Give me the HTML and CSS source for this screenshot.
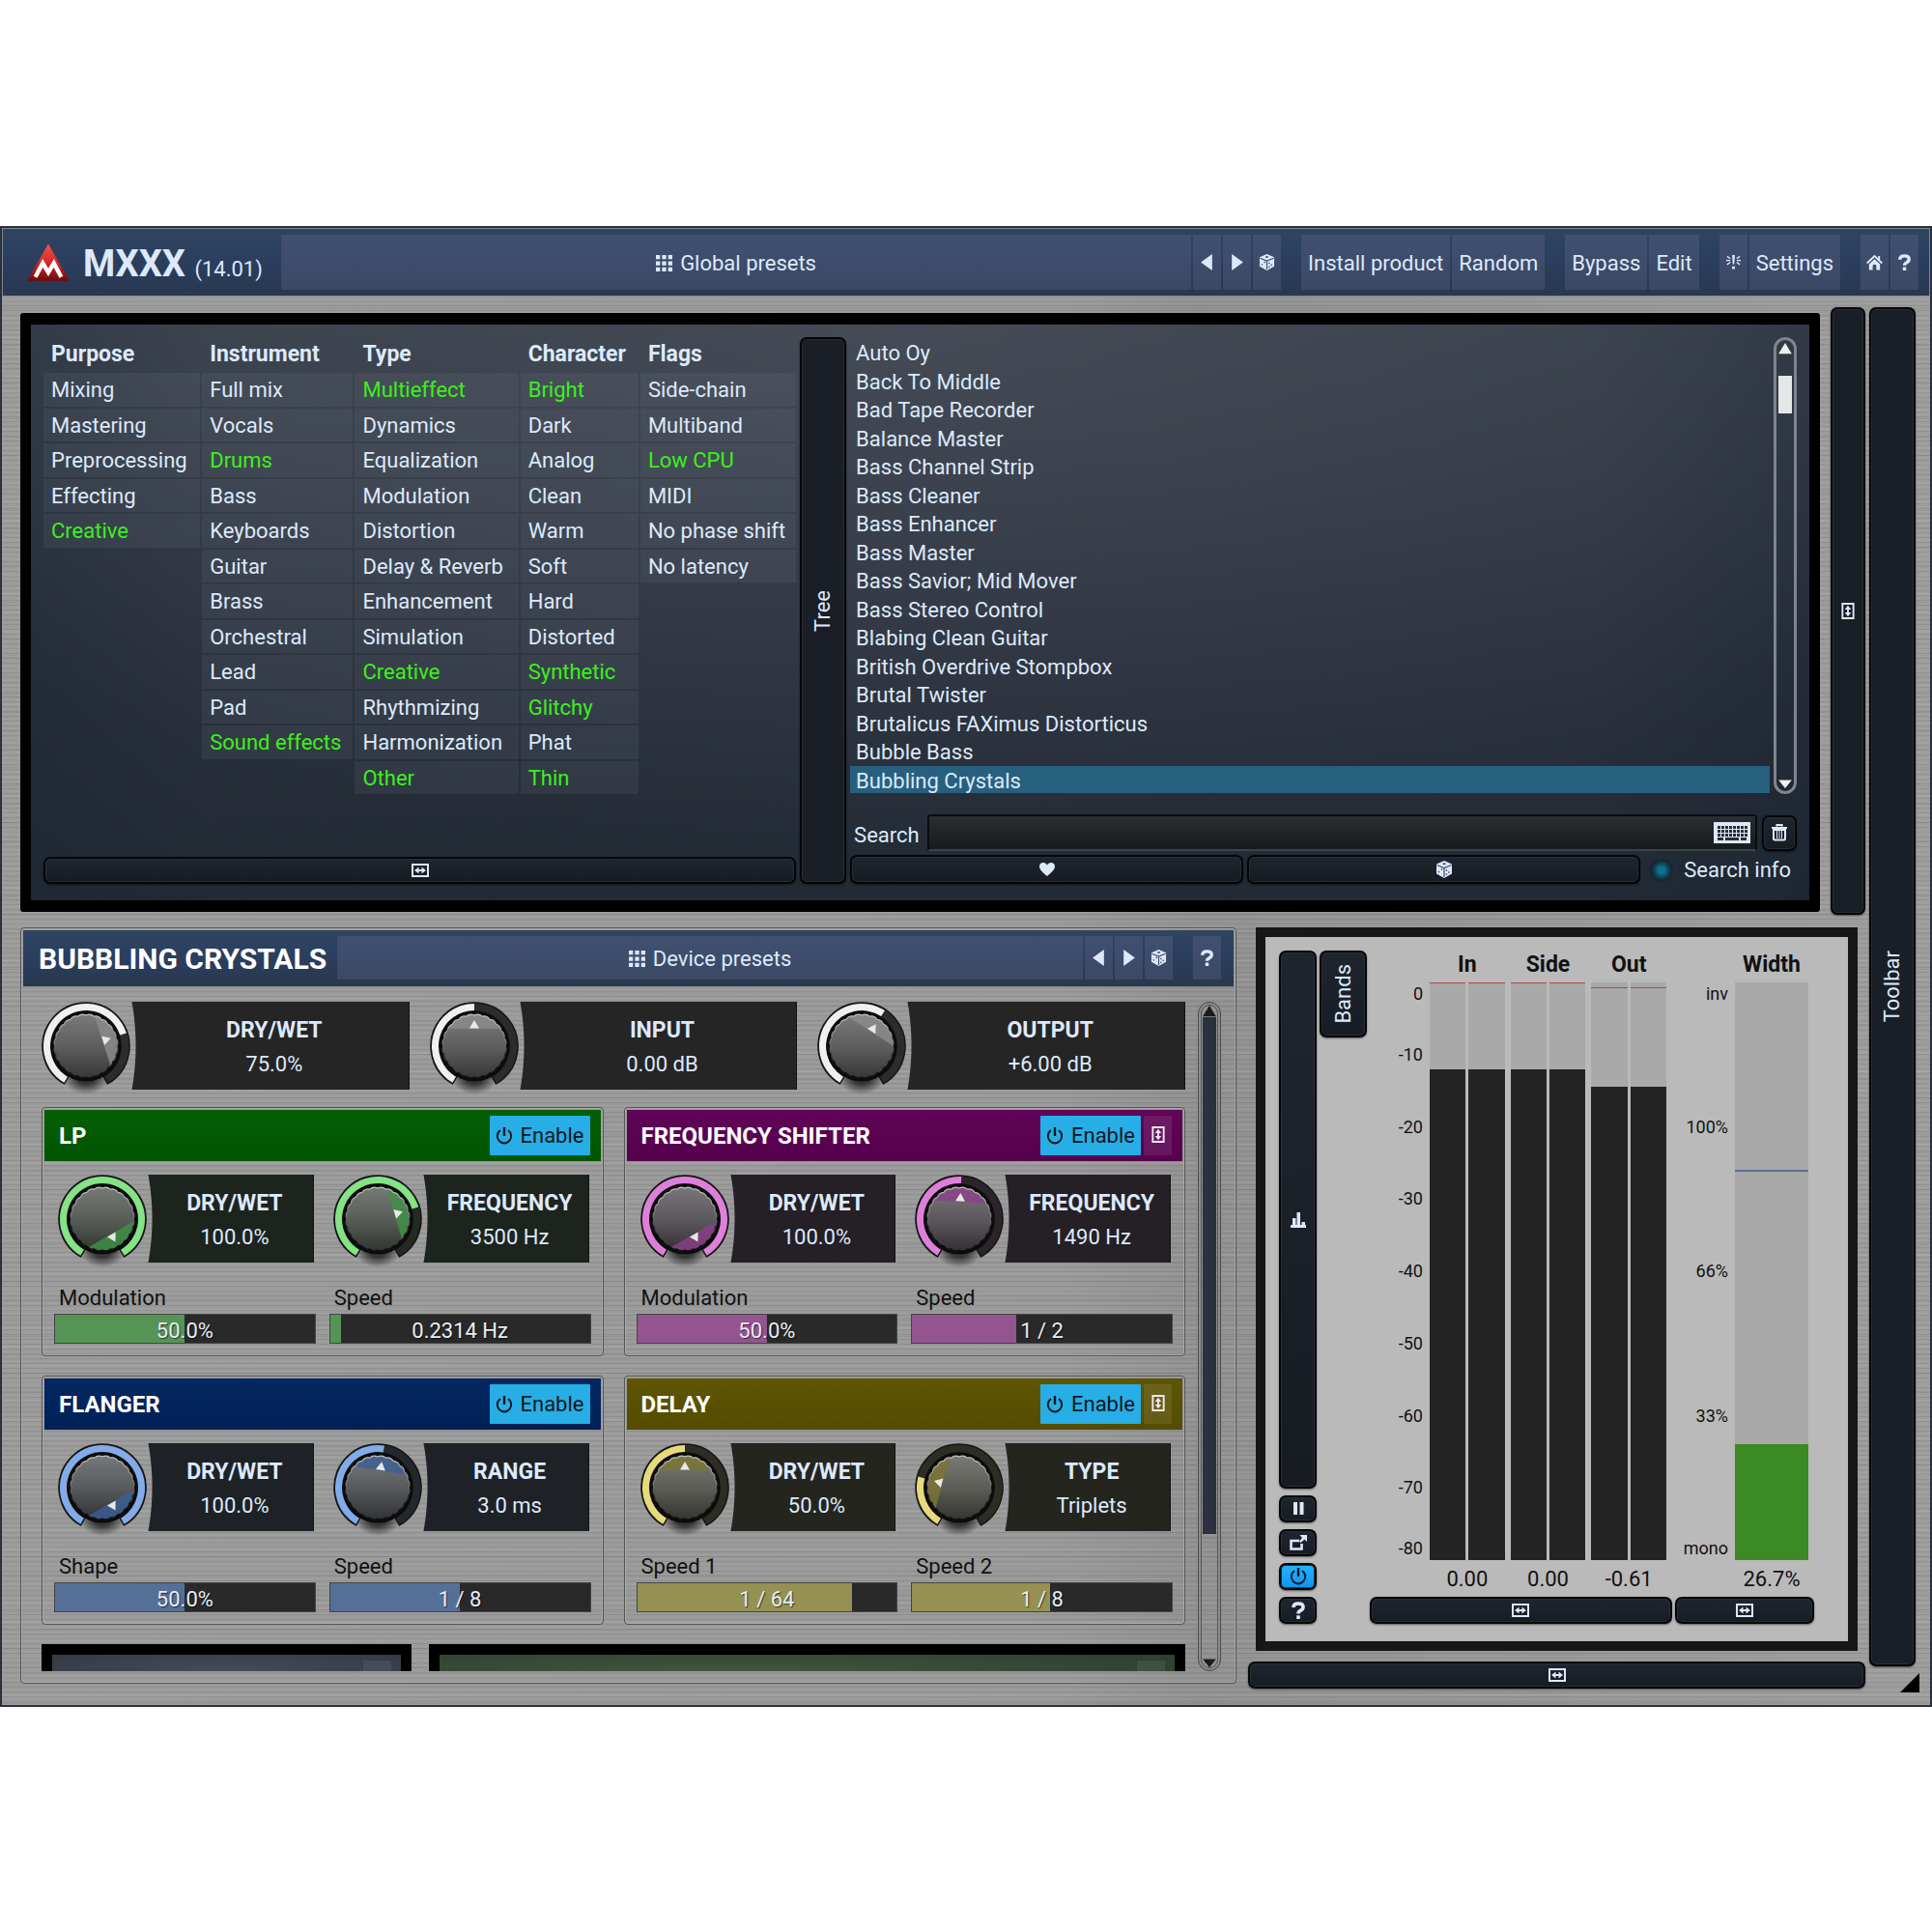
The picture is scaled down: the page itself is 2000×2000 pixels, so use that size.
FILE: index.html
```html
<!DOCTYPE html>
<html lang="en">
<head>
  <meta charset="utf-8">
  <title>MXXX</title>
  <link rel="stylesheet" href="styles.css">
</head>
<body>
  <!-- icons -->
  <svg class="sprite" aria-hidden="true">
    <linearGradient id="logo-fill" x1="0" y1="0" x2="0" y2="1">
      <stop offset="0" stop-color="#f0544c"/>
      <stop offset="0.6" stop-color="#cc2222"/>
      <stop offset="1" stop-color="#6e0a0a"/>
    </linearGradient>
    <symbol id="i-logo" viewBox="0 0 46 40">
      <path d="M23 0 45 38.500Q45.500 40 44 40H2Q.5 40 1 38.500Z" fill="url(#logo-fill)"/>
      <path d="M9 36 17 21 23 31 29 21 37 36" fill="none" stroke="#fff" stroke-width="4.500"/>
    </symbol>
    <symbol id="i-grid" viewBox="0 0 16 16">
      <path d="M0 0h4v4H0zM6 0h4v4H6zM12 0h4v4h-4zM0 6h4v4H0zM6 6h4v4H6zM12 6h4v4h-4zM0 12h4v4H0zM6 12h4v4H6zM12 12h4v4h-4z"/>
    </symbol>
    <symbol id="i-prev" viewBox="0 0 16 16"><path d="M13 0v16L2 8z"/></symbol>
    <symbol id="i-next" viewBox="0 0 16 16"><path d="M3 0v16L14 8z"/></symbol>
    <symbol id="i-dice" viewBox="0 0 18 18">
      <path d="M9 0 17 3.500V13.500L9 18 1 13.500V3.500Z"/>
      <path d="M1.500 4.500 9 7.500 16.500 4.500M9 7.500V17" fill="none" stroke="#3b4a67" stroke-width="1.200"/>
      <path d="M7.500 3.200h3M3 12l1-1M6 9.500l1-1M11 9.500l1 1M13.500 11.500l1 1M11 13.500l1 1" fill="none" stroke="#3b4a67" stroke-width="1.500"/>
    </symbol>
    <symbol id="i-burst" viewBox="0 0 18 18">
      <path d="M7.500 1h3l-.7 10H8.200zM7.500 13.500h3v3h-3z"/>
      <path d="M1 7h4.500M12.500 7H17M2 2.500 5.500 5M16 2.500 12.500 5M2 11.500 5.500 9M16 11.500 12.500 9" fill="none" stroke="currentColor" stroke-width="1.500"/>
    </symbol>
    <symbol id="i-home" viewBox="0 0 18 18">
      <path d="M9 5.500 15 11V17.500H11V13Q11 11.500 9 11.500T7 13V17.500H3V11Z"/>
      <path d="M.8 10 9 2.200 17.200 10M14 2v4" fill="none" stroke="currentColor" stroke-width="2"/>
    </symbol>
    <symbol id="i-help" viewBox="0 0 18 18">
      <path d="M4 6Q4 2 9 2T14 5.600Q14 8 11.500 9.200 9 10.400 9 12.500" fill="none" stroke="currentColor" stroke-width="3.600"/>
      <path d="M7.200 14.300h3.600V18H7.200z"/>
    </symbol>
    <symbol id="i-wide" viewBox="0 0 18 14">
      <path d="M1 1h16v12H1z" fill="none" stroke="currentColor" stroke-width="2"/>
      <path d="M3 7 7.500 3.500V6h3V3.500L15 7l-4.500 3.500V8h-3v2.500z"/>
    </symbol>
    <symbol id="i-tall" viewBox="0 0 14 18">
      <path d="M1 1h12v16H1z" fill="none" stroke="currentColor" stroke-width="2"/>
      <path d="M7 3 3.500 7.500H6v3H3.500L7 15l3.500-4.500H8v-3h2.500z"/>
    </symbol>
    <symbol id="i-heart" viewBox="0 0 18 18">
      <path d="M9 17C6 13.500 0 10 0 5.500 0 2.500 2 1 4.500 1 6.700 1 8 2 9 4c1-2 2.300-3 4.500-3C16 1 18 2.500 18 5.500 18 10 12 13.500 9 17Z"/>
    </symbol>
    <symbol id="i-keyboard" viewBox="0 0 38 22">
      <path d="M0 0h38v22H0z"/>
      <path d="M4 5.500h31M4 9.500h31M4 13.500h31" fill="none" stroke="#2a2f36" stroke-width="3" stroke-dasharray="3 1"/>
      <path d="M4 16h6v3H4zM12 16h14v3H12zM28 16h6v3h-6z" fill="#2a2f36"/>
    </symbol>
    <symbol id="i-trash" viewBox="0 0 18 18">
      <path d="M6.500 2.500V1h5v1.500M1 4h16" fill="none" stroke="currentColor" stroke-width="2.200"/>
      <path d="M3 6h12v9q0 1.500-1.500 1.500h-9Q3 16.500 3 15z" fill="none" stroke="currentColor" stroke-width="2"/>
      <path d="M6.500 7v8M9 7v8M11.500 7v8" stroke="currentColor" stroke-width="1"/>
    </symbol>
    <symbol id="i-power" viewBox="0 0 18 18">
      <path d="M5 3.200A7.200 7.200 0 1 0 13 3.200" fill="none" stroke="currentColor" stroke-width="2"/>
      <path d="M7.800 0h2.400v9H7.800z"/>
    </symbol>
    <symbol id="i-bars" viewBox="0 0 16 16">
      <path d="M0 13h16v3H0zM2 6h3.500v8H2zM6.500 0H10v14H6.500zM11.500 10H15v4h-3.500z"/>
    </symbol>
    <symbol id="i-pause" viewBox="0 0 14 14"><path d="M2 0h4v13H2zM8.500 0h4v13h-4z"/></symbol>
    <symbol id="i-popup" viewBox="0 0 18 16">
      <path d="M10 6H1.500v8.500h11V9" fill="none" stroke="currentColor" stroke-width="2.600"/>
      <path d="M10.500 0H18v7l-2.500-2.500L11.500 8 10 6.500 13 3z"/>
    </symbol>
    <symbol id="i-up" viewBox="0 0 16 14"><path d="M8 0l8 13H0z"/></symbol>
    <symbol id="i-down" viewBox="0 0 16 14"><path d="M8 14 0 4h16z"/></symbol>
  </svg>

  <main class="window">
    <header class="titlebar">
      <svg class="logo"><use href="#i-logo"/></svg>
      <h1 class="brand">MXXX <small>(14.01)</small></h1>
      <button class="bar-btn grow"><svg class="icon"><use href="#i-grid"/></svg>Global presets</button>
      <div class="btn-group">
        <button class="bar-btn square" aria-label="Previous"><svg class="icon"><use href="#i-prev"/></svg></button>
        <button class="bar-btn square" aria-label="Next"><svg class="icon"><use href="#i-next"/></svg></button>
        <button class="bar-btn square" aria-label="Random preset"><svg class="icon"><use href="#i-dice"/></svg></button>
      </div>
      <div class="btn-group">
        <button class="bar-btn">Install product</button>
        <button class="bar-btn">Random</button>
      </div>
      <div class="btn-group">
        <button class="bar-btn">Bypass</button>
        <button class="bar-btn">Edit</button>
      </div>
      <div class="btn-group">
        <button class="bar-btn square" aria-label="Panic"><svg class="icon"><use href="#i-burst"/></svg></button>
        <button class="bar-btn">Settings</button>
      </div>
      <div class="btn-group">
        <button class="bar-btn square" aria-label="Home"><svg class="icon"><use href="#i-home"/></svg></button>
        <button class="bar-btn square" aria-label="Help"><svg class="icon"><use href="#i-help"/></svg></button>
      </div>
    </header>

    <div class="content">
      <div class="workspace">
        <div class="top-row">
          <!-- preset browser -->
          <section class="screen browser">
            <div class="filter-side">
              <div class="filters">
                <ul>
                  <li class="head">Purpose</li>
                  <li><button>Mixing</button></li>
                  <li><button>Mastering</button></li>
                  <li><button>Preprocessing</button></li>
                  <li><button>Effecting</button></li>
                  <li><button class="on">Creative</button></li>
                </ul>
                <ul>
                  <li class="head">Instrument</li>
                  <li><button>Full mix</button></li>
                  <li><button>Vocals</button></li>
                  <li><button class="on">Drums</button></li>
                  <li><button>Bass</button></li>
                  <li><button>Keyboards</button></li>
                  <li><button>Guitar</button></li>
                  <li><button>Brass</button></li>
                  <li><button>Orchestral</button></li>
                  <li><button>Lead</button></li>
                  <li><button>Pad</button></li>
                  <li><button class="on">Sound effects</button></li>
                </ul>
                <ul>
                  <li class="head">Type</li>
                  <li><button class="on">Multieffect</button></li>
                  <li><button>Dynamics</button></li>
                  <li><button>Equalization</button></li>
                  <li><button>Modulation</button></li>
                  <li><button>Distortion</button></li>
                  <li><button>Delay &amp; Reverb</button></li>
                  <li><button>Enhancement</button></li>
                  <li><button>Simulation</button></li>
                  <li><button class="on">Creative</button></li>
                  <li><button>Rhythmizing</button></li>
                  <li><button>Harmonization</button></li>
                  <li><button class="on">Other</button></li>
                </ul>
                <ul>
                  <li class="head">Character</li>
                  <li><button class="on">Bright</button></li>
                  <li><button>Dark</button></li>
                  <li><button>Analog</button></li>
                  <li><button>Clean</button></li>
                  <li><button>Warm</button></li>
                  <li><button>Soft</button></li>
                  <li><button>Hard</button></li>
                  <li><button>Distorted</button></li>
                  <li><button class="on">Synthetic</button></li>
                  <li><button class="on">Glitchy</button></li>
                  <li><button>Phat</button></li>
                  <li><button class="on">Thin</button></li>
                </ul>
                <ul>
                  <li class="head">Flags</li>
                  <li><button>Side-chain</button></li>
                  <li><button>Multiband</button></li>
                  <li><button class="on">Low CPU</button></li>
                  <li><button>MIDI</button></li>
                  <li><button>No phase shift</button></li>
                  <li><button>No latency</button></li>
                </ul>
              </div>
              <button class="dark-btn" aria-label="Collapse filters"><svg class="icon wide"><use href="#i-wide"/></svg></button>
            </div>

            <button class="dark-btn tree-btn"><span class="vertical">Tree</span></button>

            <div class="preset-side">
              <div class="preset-box">
                <ul class="presets">
                  <li><button>Auto Oy</button></li>
                  <li><button>Back To Middle</button></li>
                  <li><button>Bad Tape Recorder</button></li>
                  <li><button>Balance Master</button></li>
                  <li><button>Bass Channel Strip</button></li>
                  <li><button>Bass Cleaner</button></li>
                  <li><button>Bass Enhancer</button></li>
                  <li><button>Bass Master</button></li>
                  <li><button>Bass Savior; Mid Mover</button></li>
                  <li><button>Bass Stereo Control</button></li>
                  <li><button>Blabing Clean Guitar</button></li>
                  <li><button>British Overdrive Stompbox</button></li>
                  <li><button>Brutal Twister</button></li>
                  <li><button>Brutalicus FAXimus Distorticus</button></li>
                  <li><button>Bubble Bass</button></li>
                  <li><button class="selected">Bubbling Crystals</button></li>
                </ul>
                <div class="scrollbar light">
                  <svg class="arrow"><use href="#i-up"/></svg>
                  <div class="track"><div class="thumb" style="margin-top: 22px; height: 39px"></div></div>
                  <svg class="arrow"><use href="#i-down"/></svg>
                </div>
              </div>
              <div class="search-row">
                <label for="search">Search</label>
                <div class="search-box">
                  <input type="text" id="search">
                  <svg class="keyboard"><use href="#i-keyboard"/></svg>
                </div>
                <button class="dark-btn trash-btn" aria-label="Clear search"><svg class="icon"><use href="#i-trash"/></svg></button>
              </div>
              <div class="action-row">
                <button class="dark-btn" aria-label="Favourites"><svg class="icon small"><use href="#i-heart"/></svg></button>
                <button class="dark-btn" aria-label="Random"><svg class="icon"><use href="#i-dice"/></svg></button>
                <label class="search-info"><input type="checkbox">Search info</label>
              </div>
            </div>
          </section>
          <button class="dark-btn side-btn" aria-label="Collapse browser"><svg class="icon tall"><use href="#i-tall"/></svg></button>
        </div>

        <div class="bottom-row">
          <!-- device -->
          <section class="device">
            <header class="titlebar device-bar">
              <h2>BUBBLING CRYSTALS</h2>
              <button class="bar-btn grow"><svg class="icon"><use href="#i-grid"/></svg>Device presets</button>
              <div class="btn-group">
                <button class="bar-btn square" aria-label="Previous"><svg class="icon"><use href="#i-prev"/></svg></button>
                <button class="bar-btn square" aria-label="Next"><svg class="icon"><use href="#i-next"/></svg></button>
                <button class="bar-btn square" aria-label="Random preset"><svg class="icon"><use href="#i-dice"/></svg></button>
              </div>
              <div class="btn-group">
                <button class="bar-btn square" aria-label="Help"><svg class="icon"><use href="#i-help"/></svg></button>
              </div>
            </header>
            <div class="device-body">
              <div class="device-content">
                <div class="masters">
                  <label class="control"><span class="knob" data-value="0.74"></span><span class="readout"><b>DRY/WET</b><span>75.0%</span></span></label>
                  <label class="control"><span class="knob" data-value="0.5"></span><span class="readout"><b>INPUT</b><span>0.00 dB</span></span></label>
                  <label class="control"><span class="knob" data-value="0.61"></span><span class="readout"><b>OUTPUT</b><span>+6.00 dB</span></span></label>
                </div>
                <div class="modules">
                  <section class="module green">
                    <header><h3>LP</h3><button class="enable"><svg class="icon"><use href="#i-power"/></svg>Enable</button></header>
                    <div class="controls">
                      <label class="control"><span class="knob" data-value="1"></span><span class="readout"><b>DRY/WET</b><span>100.0%</span></span></label>
                      <label class="control"><span class="knob" data-value="0.745"></span><span class="readout"><b>FREQUENCY</b><span>3500 Hz</span></span></label>
                    </div>
                    <div class="sliders">
                      <label class="slider">Modulation<span class="slot"><input type="range" value="50" style="--fill: 50%"><output>50.0%</output></span></label>
                      <label class="slider">Speed<span class="slot"><input type="range" value="4" style="--fill: 4%"><output>0.2314 Hz</output></span></label>
                    </div>
                  </section>
                  <section class="module purple">
                    <header><h3>FREQUENCY SHIFTER</h3><button class="enable"><svg class="icon"><use href="#i-power"/></svg>Enable</button><button class="expand" aria-label="Expand"><svg class="icon tall"><use href="#i-tall"/></svg></button></header>
                    <div class="controls">
                      <label class="control"><span class="knob" data-value="1"></span><span class="readout"><b>DRY/WET</b><span>100.0%</span></span></label>
                      <label class="control"><span class="knob" data-value="0.51"></span><span class="readout"><b>FREQUENCY</b><span>1490 Hz</span></span></label>
                    </div>
                    <div class="sliders">
                      <label class="slider">Modulation<span class="slot"><input type="range" value="50" style="--fill: 50%"><output>50.0%</output></span></label>
                      <label class="slider">Speed<span class="slot"><input type="range" value="40" style="--fill: 40%"><output>1 / 2</output></span></label>
                    </div>
                  </section>
                  <section class="module blue">
                    <header><h3>FLANGER</h3><button class="enable"><svg class="icon"><use href="#i-power"/></svg>Enable</button></header>
                    <div class="controls">
                      <label class="control"><span class="knob" data-value="1"></span><span class="readout"><b>DRY/WET</b><span>100.0%</span></span></label>
                      <label class="control"><span class="knob" data-value="0.53"></span><span class="readout"><b>RANGE</b><span>3.0 ms</span></span></label>
                    </div>
                    <div class="sliders">
                      <label class="slider">Shape<span class="slot"><input type="range" value="50" style="--fill: 50%"><output>50.0%</output></span></label>
                      <label class="slider">Speed<span class="slot"><input type="range" value="50" style="--fill: 50%"><output>1 / 8</output></span></label>
                    </div>
                  </section>
                  <section class="module olive">
                    <header><h3>DELAY</h3><button class="enable"><svg class="icon"><use href="#i-power"/></svg>Enable</button><button class="expand" aria-label="Expand"><svg class="icon tall"><use href="#i-tall"/></svg></button></header>
                    <div class="controls">
                      <label class="control"><span class="knob" data-value="0.5"></span><span class="readout"><b>DRY/WET</b><span>50.0%</span></span></label>
                      <label class="control"><span class="knob" data-value="0.25"></span><span class="readout"><b>TYPE</b><span>Triplets</span></span></label>
                    </div>
                    <div class="sliders">
                      <label class="slider">Speed 1<span class="slot"><input type="range" value="83" style="--fill: 83%"><output>1 / 64</output></span></label>
                      <label class="slider">Speed 2<span class="slot"><input type="range" value="53" style="--fill: 53%"><output>1 / 8</output></span></label>
                    </div>
                  </section>
                </div>
                <div class="more">
                  <div class="peek"><i></i></div>
                  <div class="peek peek-green"><i></i></div>
                </div>
              </div>
              <div class="scrollbar dark">
                <svg class="arrow"><use href="#i-up"/></svg>
                <div class="track"><div class="thumb" style="height: 81%"></div></div>
                <svg class="arrow"><use href="#i-down"/></svg>
              </div>
            </div>
          </section>

          <!-- meters -->
          <div class="meter-side">
            <section class="meters">
              <div class="meter-tools">
                <button class="dark-btn tall-btn" aria-label="Statistics"><svg class="icon small"><use href="#i-bars"/></svg></button>
                <button class="dark-btn" aria-label="Pause"><svg class="icon pause"><use href="#i-pause"/></svg></button>
                <button class="dark-btn" aria-label="Pop up"><svg class="icon"><use href="#i-popup"/></svg></button>
                <button class="dark-btn active" aria-label="Enable meters"><svg class="icon"><use href="#i-power"/></svg></button>
                <button class="dark-btn" aria-label="Help"><svg class="icon"><use href="#i-help"/></svg></button>
              </div>
              <button class="dark-btn bands-btn"><span class="vertical">Bands</span></button>
              <div class="meter-block levels">
                <div class="scale">
                  <span>0</span><span>-10</span><span>-20</span><span>-30</span><span>-40</span><span>-50</span><span>-60</span><span>-70</span><span>-80</span>
                </div>
                <div class="meter">
                  <h4>In</h4>
                  <div class="pair">
                    <div class="level"><i style="height: 85%"></i><s style="top: 0"></s></div>
                    <div class="level"><i style="height: 85%"></i><s style="top: 0"></s></div>
                  </div>
                  <output>0.00</output>
                </div>
                <div class="meter">
                  <h4>Side</h4>
                  <div class="pair">
                    <div class="level"><i style="height: 85%"></i><s style="top: 0"></s></div>
                    <div class="level"><i style="height: 85%"></i><s style="top: 0"></s></div>
                  </div>
                  <output>0.00</output>
                </div>
                <div class="meter">
                  <h4>Out</h4>
                  <div class="pair">
                    <div class="level"><i style="height: 82%"></i><s style="top: 0.8%"></s></div>
                    <div class="level"><i style="height: 82%"></i><s style="top: 0.8%"></s></div>
                  </div>
                  <output>-0.61</output>
                </div>
                <button class="dark-btn" aria-label="Collapse levels"><svg class="icon wide"><use href="#i-wide"/></svg></button>
              </div>
              <div class="meter-block width">
                <div class="scale">
                  <span>inv</span><span>100%</span><span>66%</span><span>33%</span><span>mono</span>
                </div>
                <div class="meter">
                  <h4>Width</h4>
                  <div class="pair">
                    <div class="level"><i style="height: 20%"></i><s style="top: 32.500%"></s></div>
                  </div>
                  <output>26.7%</output>
                </div>
                <button class="dark-btn" aria-label="Collapse width"><svg class="icon wide"><use href="#i-wide"/></svg></button>
              </div>
            </section>
            <button class="dark-btn" aria-label="Collapse meters"><svg class="icon wide"><use href="#i-wide"/></svg></button>
          </div>
        </div>
      </div>

      <aside class="toolbar">
        <button class="dark-btn"><span class="vertical">Toolbar</span></button>
        <div class="resize"></div>
      </aside>
    </div>
  </main>

  <script src="knobs.js"></script>
</body>
</html>
```

FILE: styles.css
```css
* {
  box-sizing: border-box;
}

body {
  margin: 0;
  padding: 234px 0;
  background: #fff;
  font-family: Roboto, "Liberation Sans", sans-serif;
  font-size: 22px;
  line-height: 28px;
  color: #dde9fb;
}

button, input, output {
  font: inherit;
  color: inherit;
}

button {
  margin: 0;
  padding: 0;
  border: 0;
  background: none;
  white-space: nowrap;
}

ul, h1, h2, h3, h4 {
  margin: 0;
  padding: 0;
  list-style: none;
}

.sprite {
  position: absolute;
  width: 0;
  height: 0;
}

.icon {
  width: 18px;
  height: 18px;
  fill: currentColor;
  flex: none;
}

.icon.small { width: 16px; height: 16px; }
.icon.wide { width: 18px; height: 14px; }
.icon.tall { width: 14px; height: 17px; }
.icon.pause { width: 14px; height: 14px; }

.vertical {
  writing-mode: vertical-rl;
  transform: rotate(180deg);
}

/* window with brushed metal */
.window {
  border: 2px solid #2a303c;
  background:
    repeating-linear-gradient(rgba(0,0,0,0.07) 0 1px, transparent 1px 3px, rgba(255,255,255,0.05) 3px 4px, transparent 4px 5px),
    repeating-linear-gradient(transparent 0 7px, rgba(0,0,0,0.05) 7px 8px, transparent 8px 17px, rgba(255,255,255,0.05) 17px 19px),
    linear-gradient(90deg, #9b9b9b, #999 55%, #919191 62%, #9d9d9d);
}

.titlebar {
  display: flex;
  align-items: stretch;
  height: 70px;
  padding: 6px 11px 6px 25px;
  border: 1px solid #7d8490;
  border-bottom: 0;
  background: linear-gradient(#30455f, #2b3f60 40%, #293850);
}

.logo {
  width: 44px;
  height: 39px;
  margin: 9px 14px 0 0;
}

.brand {
  width: 205px;
  font-size: 38px;
  line-height: 60px;
  font-weight: 700;
  white-space: nowrap;
}

.brand small {
  font-size: 22px;
  font-weight: 400;
}

.bar-btn {
  display: flex;
  align-items: center;
  justify-content: center;
  gap: 8px;
  padding: 2px 7px 0;
  background: linear-gradient(#405071, #3b4965);
}

.bar-btn .icon {
  width: 17px;
  height: 17px;
}

.bar-btn.grow {
  flex: 1;
}

.bar-btn.square {
  width: 29px;
  padding: 0;
}

.btn-group {
  display: flex;
  gap: 2px;
  margin-left: 21px;
}

.grow + .btn-group {
  margin-left: 2px;
}

.content {
  display: flex;
  gap: 4px;
  padding: 12px 15px 17px 19px;
}

.workspace {
  flex: 1;
  min-width: 0;
}

.dark-btn {
  display: flex;
  align-items: center;
  justify-content: center;
  min-height: 28px;
  border: 2px solid #050607;
  border-radius: 7px;
  background: linear-gradient(#1f252f, #171c23);
  box-shadow: inset 0 0 0 1px #2b2d35, 0 1px 2px rgba(0,0,0,0.5);
}

.toolbar {
  display: flex;
  flex-direction: column;
  width: 48px;
}

.toolbar .dark-btn {
  flex: 1;
  background: #1a1f27;
}

.resize {
  width: 20px;
  height: 20px;
  margin: 7px -4px -4px auto;
  background: #000;
  clip-path: polygon(100% 0, 100% 100%, 0 100%);
}

/* preset browser */
.top-row {
  display: flex;
  gap: 11px;
}

.side-btn {
  width: 36px;
  background: #1a1f27;
}

.screen {
  flex: 1;
  display: flex;
  gap: 4px;
  margin: 6px 0 3px;
  padding: 13px 13px 17px;
  border: 12px solid #000;
  border-width: 12px 11px;
  border-radius: 3px;
  background:
    radial-gradient(ellipse 70% 90% at 50% 0, rgba(90,95,105,0.4), transparent),
    linear-gradient(90deg, rgba(20,30,45,0.25), transparent 10% 88%, rgba(20,30,45,0.3)),
    linear-gradient(#363e49, #2b323e 50%, #222a34);
}

.filter-side {
  display: flex;
  flex-direction: column;
  justify-content: space-between;
  flex: 780;
}

.filters {
  display: grid;
  grid-template-columns: 162fr 156fr 169fr 122fr 161fr;
  gap: 2px;
  height: 473px;
}

.filters ul {
  display: grid;
  grid-template-rows: 35px repeat(12, 1fr);
  row-gap: 2px;
}

.filters .head {
  padding: 4px 0 0 8px;
  font-size: 23px;
  font-weight: 700;
}

.filters button {
  width: 100%;
  height: 100%;
  padding: 2px 0 0 8px;
  text-align: left;
  background: rgba(130,140,160,0.12);
}

.filters .on {
  color: #3cf01a;
}

.tree-btn {
  width: 48px;
  background: #1a1e27;
}

.preset-side {
  flex: 981;
}

.preset-box {
  display: flex;
  gap: 4px;
  height: 473px;
}

.presets {
  flex: 1;
  display: grid;
  grid-auto-rows: 1fr;
  padding-top: 1px;
}

.presets button {
  display: block;
  width: 100%;
  height: 28px;
  padding: 2px 0 0 6px;
  text-align: left;
}

.presets .selected {
  background: #27607e;
}

.scrollbar {
  display: flex;
  flex-direction: column;
  align-items: center;
  width: 24px;
  padding: 3px 0;
  border: 3px solid #80848c;
  border-radius: 12px;
}

.scrollbar .arrow {
  width: 14px;
  height: 12px;
}

.scrollbar .track {
  flex: 1;
  width: 14px;
}

.scrollbar.light .arrow { fill: #f0f0f0; }
.scrollbar.light .thumb { background: #e4e6e8; }

.scrollbar.dark {
  border: 1px solid #4c4c4c;
  box-shadow: inset 0 0 0 2px #8c8c8c, inset 0 0 0 3px #555;
}

.scrollbar.dark .arrow { fill: #1a1a1a; }
.scrollbar.dark .thumb { background: #2b313e; }

.search-row {
  display: flex;
  align-items: center;
  gap: 5px;
  margin-top: 21px;
}

.search-row label {
  width: 75px;
  padding: 5px 0 0 4px;
}

.search-box {
  position: relative;
  flex: 1;
  height: 38px;
}

.search-box input {
  width: 100%;
  height: 100%;
  padding: 0 50px 0 8px;
  border: 2px solid #0b0d10;
  border-bottom-color: #3a424c;
  border-radius: 3px;
  background: linear-gradient(#2a2e31, #171b1e);
}

.keyboard {
  position: absolute;
  right: 7px;
  top: 8px;
  width: 38px;
  height: 22px;
  fill: #dde9fb;
}

.trash-btn {
  width: 36px;
  height: 37px;
}

.action-row {
  display: flex;
  gap: 4px;
  margin-top: 4px;
}

.action-row .dark-btn {
  flex: 1;
}

.search-info {
  display: flex;
  align-items: center;
  gap: 11px;
  padding: 2px 6px 0 6px;
}

.search-info input {
  appearance: none;
  width: 24px;
  height: 24px;
  margin: 0;
  border-radius: 50%;
  background: radial-gradient(#14708f 20%, #0d4a62 40%, #132733 62%, #1f2731);
}

/* device */
.bottom-row {
  display: grid;
  grid-template-columns: 1259fr 639fr;
  gap: 12px;
  margin-top: 13px;
}

.device {
  margin-bottom: 5px;
  padding: 2px;
  border: 1px solid #555;
  border-radius: 4px;
  box-shadow: inset 0 0 0 1px #a9a9a9;
}

.device-bar {
  height: 58px;
  padding: 6px 13px 7px 16px;
  border: 0;
}

.device-bar h2 {
  margin-right: 11px;
  font-size: 30px;
  line-height: 48px;
  color: #fff;
  white-space: nowrap;
}

.device-body {
  display: flex;
  gap: 13px;
  padding: 16px 13px 10px 19px;
}

.device-content {
  flex: 1;
  min-width: 0;
}

.masters {
  display: grid;
  grid-template-columns: repeat(3, 1fr);
  gap: 21px;
  margin-bottom: 18px;
}

.control {
  display: flex;
  gap: 1px;
  height: 91px;
}

.knob {
  position: relative;
  width: 92px;
}

.knob svg {
  display: block;
  width: 92px;
  height: 104px;
}

.knob input {
  position: absolute;
  inset: 0;
  width: 92px;
  height: 92px;
  margin: 0;
  opacity: 0;
}

.readout {
  flex: 1;
  padding: 12px 0 0 8px;
  text-align: center;
  line-height: 35px;
  background: radial-gradient(circle 257px at -252px 50%, transparent 256px, var(--panel) 257px);
  box-shadow: inset -1px 0 #111;
}

.readout b, .readout span {
  display: block;
}

.readout b {
  font-size: 23px;
}

.device {
  --ring: #f0f0f0;
  --off: #2c2c2c;
  --facet: #8c8c8c;
  --panel: #252525;
}

.green { --head: #005c00; --ring: #85e285; --off: #222a23; --facet: #3f9446; --panel: #1d241e; --bar: #559455; }
.purple { --head: #5d0054; --ring: #de80da; --off: #2b242b; --facet: #8b4089; --panel: #251f26; --bar: #94548f; }
.blue { --head: #00235e; --ring: #84abe9; --off: #24282d; --facet: #3c5f96; --panel: #1e2226; --bar: #556f97; }
.olive { --head: #5b5200; --ring: #e5db7c; --off: #2e2d24; --facet: #7a752f; --panel: #25251f; --bar: #949152; }

.modules {
  display: grid;
  grid-template-columns: 1fr 1fr;
  gap: 20px 21px;
}

.module {
  padding: 2px;
  border: 1px solid #555;
  border-radius: 4px;
  box-shadow: inset 0 0 0 1px #a9a9a9;
}

.module header {
  display: flex;
  gap: 3px;
  height: 53px;
  padding: 6px 11px 6px 15px;
  background: linear-gradient(rgba(255,255,255,0.02), rgba(0,0,0,0.08)), var(--head);
}

.module h3 {
  flex: 1;
  font-size: 24px;
  line-height: 43px;
  color: #fff;
}

.enable {
  display: flex;
  align-items: center;
  gap: 8px;
  padding: 1px 6px 0;
  border-radius: 1px;
  background: #27aee6;
  color: #101820;
}

.expand {
  width: 29px;
  background: rgba(255,255,255,0.09);
  color: #f2e6f2;
}

.controls {
  display: grid;
  grid-template-columns: 1fr 1fr;
  gap: 20px;
  padding: 14px 12px 23px 14px;
}

.sliders {
  display: grid;
  grid-template-columns: 1fr 1fr;
  gap: 14px;
  padding: 0 10px 10px;
}

.slider {
  color: #111;
  text-indent: 5px;
}

.slot {
  display: block;
  position: relative;
  height: 31px;
  margin-top: 2px;
}

.slot input {
  appearance: none;
  display: block;
  width: 100%;
  height: 100%;
  margin: 0;
  border: 1px solid #444;
  background: linear-gradient(90deg, var(--bar) var(--fill), #292929 var(--fill));
}

.slot input::-webkit-slider-thumb {
  appearance: none;
  width: 1px;
}

.slot output {
  position: absolute;
  inset: 0;
  line-height: 35px;
  text-align: center;
  text-indent: 0;
  color: #e6edf8;
  text-shadow: 1px 1px 1px rgba(0,0,0,0.6);
  pointer-events: none;
}

/* top edge of the next screens */
.more {
  display: grid;
  grid-template-columns: 384fr 784fr;
  gap: 18px;
  margin-top: 20px;
}

.peek {
  display: flex;
  justify-content: flex-end;
  height: 28px;
  padding: 6px 10px 0;
  border: 11px solid #000;
  border-bottom: 0;
  background: radial-gradient(ellipse 80% 200% at 50% 100%, #434c58, #2f3742);
}

.peek-green {
  background: radial-gradient(ellipse 80% 200% at 40% 100%, #41563f, #2c3c30);
}

.peek i {
  width: 29px;
  background: rgba(255,255,255,0.07);
}

/* meters */
.meter-side {
  display: flex;
  flex-direction: column;
  gap: 11px;
}

.meters {
  flex: 1;
  display: flex;
  gap: 3px;
  margin: 0 8px;
  padding: 14px 35px 18px 14px;
  border: 10px solid #171717;
  background: #bababa;
  color: #111;
}

.meters .dark-btn {
  color: #dde9fb;
}

.meter-tools {
  display: flex;
  flex-direction: column;
  gap: 7px;
  width: 39px;
}

.meter-tools .tall-btn {
  flex: 1;
}

.meters .active {
  background: linear-gradient(#21b4ff, #0d94ee);
  color: #0b1a2a;
}

.bands-btn {
  width: 49px;
  height: 90px;
}

.meter-block {
  display: grid;
  grid-template-rows: 669px 28px;
  column-gap: 6px;
}

.levels {
  flex: 313;
  grid-template-columns: 56px 1fr 1fr 1fr 0;
  column-gap: 6px;
}

.width {
  flex: 144;
  grid-template-columns: 56px 1fr 0;
}

.meter-block .dark-btn {
  grid-column: 1 / -1;
}

.scale {
  display: flex;
  flex-direction: column;
  padding: 33px 1px 38px 0;
  font-size: 18px;
  line-height: 24px;
  text-align: right;
}

.scale span {
  flex: 2;
  display: flex;
  align-items: center;
  justify-content: flex-end;
}

.scale span:first-child {
  flex: 1;
  align-items: flex-start;
}

.scale span:last-child {
  flex: 1;
  align-items: flex-end;
}

.meter {
  display: flex;
  flex-direction: column;
  text-align: center;
}

.meter h4 {
  height: 33px;
  font-size: 23px;
  line-height: 30px;
}

.pair {
  flex: 1;
  display: flex;
  gap: 3px;
}

.level {
  flex: 1;
  position: relative;
  display: flex;
  align-items: flex-end;
  background: #a9a9a9;
}

.level i {
  width: 100%;
  background: #242424;
}

.level s {
  position: absolute;
  left: 0;
  right: 0;
  height: 1px;
  background: #a84a4a;
}

.width .level i { background: #3b8a24; }
.width .level s { height: 2px; background: #5a7090; }

.meter output {
  height: 38px;
  line-height: 40px;
}
```

FILE: knobs.js
```js
const SWEEP = 300;
const TEETH = 24;

function point(r, deg) {
  const a = (deg - 90) * Math.PI / 180;
  return (46 + r * Math.cos(a)).toFixed(2) + ' ' + (46 + r * Math.sin(a)).toFixed(2);
}

// closed ring piece between two angles
function ring(r1, r2, from, to) {
  const big = to - from > 180 ? 1 : 0;
  return `M${point(r2, from)}A${r2} ${r2} 0 ${big} 1 ${point(r2, to)}L${point(r1, to)}A${r1} ${r1} 0 ${big} 0 ${point(r1, from)}Z`;
}

function scallop(r) {
  let d = 'M' + point(r, 0);
  for (let i = 0; i < TEETH; i++) {
    const step = 360 / TEETH;
    d += 'Q' + point(r + 2.5, (i + 0.5) * step) + ' ' + point(r, (i + 1) * step);
  }
  return d + 'Z';
}

document.querySelectorAll('.knob').forEach((knob, n) => {
  const value = Number(knob.dataset.value);
  const start = -SWEEP / 2;
  const angle = start + SWEEP * value;
  knob.innerHTML = `
    <svg viewBox="0 0 92 104">
      <defs>
        <linearGradient id="face${n}" x1="0" y1="0" x2="0" y2="1">
          <stop offset="0" stop-color="#747474"/><stop offset="0.5" stop-color="#565656"/><stop offset="1" stop-color="#2b2b2b"/>
        </linearGradient>
        <linearGradient id="edge${n}" x1="0" y1="0" x2="0" y2="1">
          <stop offset="0" stop-color="#c4c4c4"/><stop offset="0.45" stop-color="#777"/><stop offset="0.8" stop-color="#111"/>
        </linearGradient>
        <radialGradient id="drop${n}">
          <stop offset="0.4" stop-color="#000" stop-opacity="0.65"/><stop offset="1" stop-color="#000" stop-opacity="0"/>
        </radialGradient>
        <clipPath id="clip${n}"><path d="${scallop(32)}"/></clipPath>
      </defs>
      <ellipse cx="46" cy="78" rx="24" ry="18" fill="url(#drop${n})"/>
      <path d="${ring(36, 45, start, -start)}" fill="var(--off)" stroke="#151515" stroke-width="1.5"/>
      <path d="${ring(37, 44, start + 1, value === 1 ? angle - 1 : angle)}" fill="var(--ring)"/>
      <circle cx="46" cy="46" r="36.500" fill="#0c0c0c"/>
      <path d="${scallop(32)}" fill="url(#face${n})"/>
      <path d="${scallop(32)}" fill="var(--ring)" opacity="0.06"/>
      <g clip-path="url(#clip${n})">
        <path d="M10 28H82V10H10Z" fill="var(--facet)" opacity="0.8" transform="rotate(${angle} 46 46)"/>
      </g>
      <path d="${scallop(32)}" fill="none" stroke="url(#edge${n})" stroke-width="1.200"/>
      <path d="M46 19 51 27.500H41Z" fill="#e8e8e8" transform="rotate(${angle} 46 46)"/>
    </svg>
    <input type="range" min="0" max="1" step="0.001" value="${value}">`;
});
```
